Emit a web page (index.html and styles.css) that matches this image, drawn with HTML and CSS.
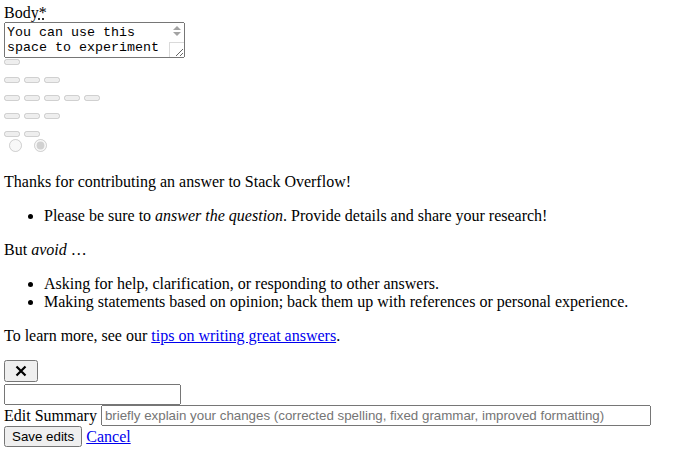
FILE: index.html
```html
<!DOCTYPE html>
<html>
<head>
<meta charset="utf-8">
<link rel="stylesheet" href="styles.css">
</head>
<body>
<label class="field-label" for="body">Body<abbr title="required">*</abbr></label>
<div class="editor-wrap">
  <textarea id="body" class="editor" cols="20" rows="2">You can use this space to experiment with the editor</textarea>
  <span class="scroll-arrows" aria-hidden="true"><span class="arrow-up"></span><span class="arrow-down"></span></span>
  <span class="scroll-corner" aria-hidden="true"></span>
</div>
<div class="toolbar">
  <div class="tool-row"><button class="tool" disabled></button></div>
  <div class="tool-row"><button class="tool" disabled></button><button class="tool" disabled></button><button class="tool" disabled></button></div>
  <div class="tool-row"><button class="tool" disabled></button><button class="tool" disabled></button><button class="tool" disabled></button><button class="tool" disabled></button><button class="tool" disabled></button></div>
  <div class="tool-row"><button class="tool" disabled></button><button class="tool" disabled></button><button class="tool" disabled></button></div>
  <div class="tool-row"><button class="tool" disabled></button><button class="tool" disabled></button></div>
</div>
<div class="modes">
  <input class="mode" type="radio" name="mode" disabled>
  <input class="mode" type="radio" name="mode" checked disabled>
</div>
<p class="intro first">Thanks for contributing an answer to Stack Overflow!</p>
<ul class="tips">
  <li>Please be sure to <em>answer the question</em>. Provide details and share your research!</li>
</ul>
<p class="intro">But <em>avoid</em> …</p>
<ul class="tips">
  <li>Asking for help, clarification, or responding to other answers.</li>
  <li>Making statements based on opinion; back them up with references or personal experience.</li>
</ul>
<p class="intro">To learn more, see our <a href="#">tips on writing great answers</a>.</p>
<div class="actions">
  <button class="close-btn" type="button" aria-label="close"><svg class="close-icon" width="12" height="12" viewBox="0 0 12 12"><path d="M1.5 1.5 L10.5 10.5 M10.5 1.5 L1.5 10.5" stroke="#000" stroke-width="2.2" fill="none"/></svg></button>
  <input class="plain-input" type="text">
  <div class="summary-row">
    <label class="summary-label" for="summary">Edit Summary</label>
    <input id="summary" class="summary-input" type="text" placeholder="briefly explain your changes (corrected spelling, fixed grammar, improved formatting)">
  </div>
  <div class="submit-row">
    <button class="save-btn" type="button">Save edits</button>
    <a class="cancel" href="#">Cancel</a>
  </div>
</div>
</body>
</html>
```

FILE: styles.css
```css
html, body {
  background: #fff;
}
body {
  margin: 4px;
  font-family: "Liberation Serif", "Times New Roman", serif;
  font-size: 16px;
  color: #000;
}
.field-label {
  display: block;
  line-height: 18px;
}
.field-label abbr {
  text-decoration: underline dotted;
}
.editor-wrap {
  position: relative;
  width: 181px;
}
.editor {
  display: block;
  margin: 0;
  width: 181px;
  height: 36px;
  box-sizing: border-box;
  padding: 2px 16px 2px 2px;
  font-family: "Liberation Mono", "Courier New", monospace;
  font-size: 13.333px;
  line-height: 15px;
  overflow: hidden;
}
.scroll-arrows {
  position: absolute;
  top: 4px;
  right: 4px;
  width: 9px;
  display: flex;
  flex-direction: column;
  align-items: center;
  gap: 2px;
}
.arrow-up {
  width: 0;
  height: 0;
  border-left: 4px solid transparent;
  border-right: 4px solid transparent;
  border-bottom: 4px solid #a3a3a3;
}
.arrow-down {
  width: 0;
  height: 0;
  border-left: 4px solid transparent;
  border-right: 4px solid transparent;
  border-top: 4px solid #a3a3a3;
}
.scroll-corner {
  position: absolute;
  right: 1px;
  bottom: 1px;
  width: 14px;
  height: 14px;
  border-left: 1px solid #dadada;
  border-top: 1px solid #dadada;
  pointer-events: none;
}
.toolbar {
  display: flex;
  flex-direction: column;
  gap: 12px;
  padding-top: 1px;
}
.tool-row {
  display: flex;
  gap: 4px;
}
.tool {
  width: 16px;
  height: 6px;
  margin: 0;
  padding: 0;
}
.modes {
  line-height: 13px;
  margin-top: -1px;
}
.mode {
  margin: 3px 3px 0 5px;
}
.intro {
  margin: 16px 0;
}
.intro.first {
  margin-top: 20px;
}
.tips {
  margin: 16px 0;
  padding-left: 40px;
}
.close-btn {
  display: flex;
  align-items: center;
  justify-content: center;
  width: 34px;
  height: 22px;
  margin: -1px 0 0;
  padding: 0;
}
.close-icon {
  display: block;
  width: 12px;
  height: 12px;
}
.plain-input {
  display: block;
  width: 177px;
  box-sizing: border-box;
  margin: 2px 0 0;
  font-family: "Liberation Sans", Arial, sans-serif;
  font-size: 13.333px;
}
.summary-row {
  display: flex;
  align-items: center;
  gap: 4px;
  margin-top: 0;
}
.summary-input {
  width: 550px;
  box-sizing: border-box;
  margin: 0;
  font-family: "Liberation Sans", Arial, sans-serif;
  font-size: 13.333px;
}
.summary-input::placeholder {
  color: #757575;
}
.submit-row {
  display: flex;
  align-items: center;
  gap: 4px;
  margin-top: 0;
}
.save-btn {
  margin: 0;
  font-family: "Liberation Sans", Arial, sans-serif;
  font-size: 13.333px;
}
.cancel {
  color: #0000ee;
}
```
